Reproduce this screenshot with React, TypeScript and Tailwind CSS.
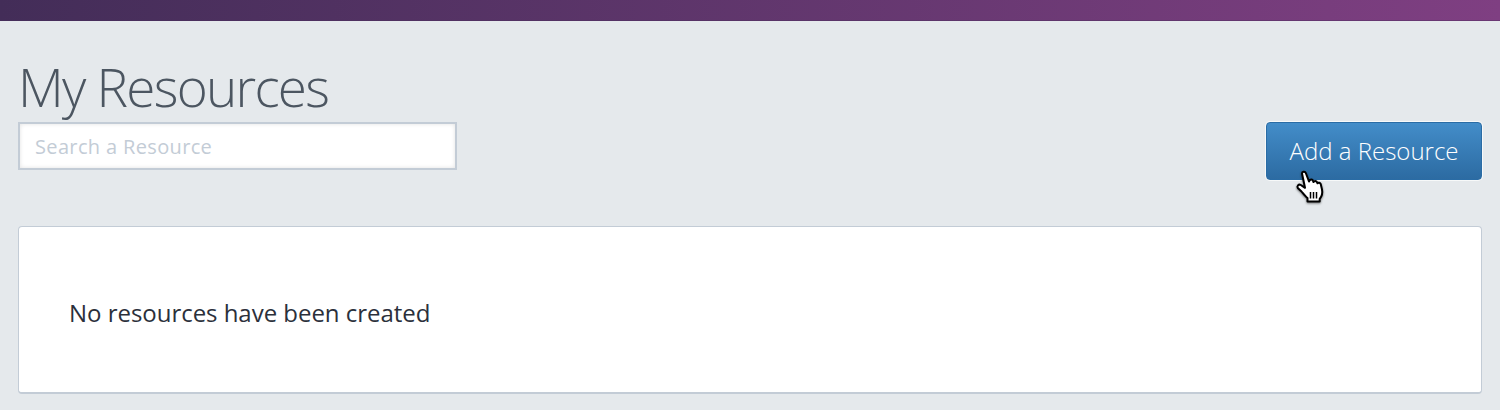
export default function App() {
  return (
    <div className="w-[1500px] h-[410px] overflow-hidden bg-[#e5e9ec] font-['Open_Sans',sans-serif]">
      <div className="h-[21px] bg-gradient-to-r from-[#432d58] to-[#7f3f82] border-b border-[#4a3060]/40" />
      <div className="px-[18px]">
        <h1 className="pt-[32px] h-[101px] text-[53px] leading-[68px] font-light text-[#4c5661] tracking-[-1.75px]">My Resources</h1>
        <div className="flex items-start justify-between">
          <input
            readOnly
            placeholder="Search a Resource"
            className="w-[439px] h-[48px] bg-white border-2 border-[#c3ccd6] pl-[15px] text-[20px] tracking-[0.35px] text-[#333] placeholder:text-[#c3ccd6] outline-none shadow-[inset_0_0_4px_rgba(0,0,0,0.12)]"
          />
          <div className="relative">
            <button className="w-[216px] h-[58px] rounded-[4px] border border-[#2a6ca5] bg-gradient-to-b from-[#438dc9] to-[#2c6ba2] text-[24px] font-light text-white shadow-[0_0_0_1px_rgba(255,255,255,0.7)]">
              Add a Resource
            </button>
            <svg className="absolute left-[29px] top-[47px] w-[34px] h-[38px]" viewBox="0 0 34 38">
              <defs>
                <filter id="s" x="-30%" y="-30%" width="160%" height="160%">
                  <feDropShadow dx="0" dy="1" stdDeviation="1" floodColor="#000" floodOpacity="0.5" />
                </filter>
              </defs>
              <path
                d="M7 4.500c0-2 3-2.500 3.800-.5l3.200 8.500 .5-1c.8-1.500 3-1.300 3.500.3l.5 1.200c.6-1.400 2.800-1.400 3.400 0l.6 1.300c.8-1 2.800-.8 3.200 .8 l1.300 5.400c.8 4-.2 7-2.300 9.500v2.500H12.500v-3.500c-2-1.200-4-4-6-6.500L2.800 19c-1.200-1.800 .8-4.300 3-3l4.200 2.800L7 4.500z"
                fill="#fff"
                stroke="#000"
                strokeWidth="2"
                strokeLinejoin="round"
                filter="url(#s)"
              />
              <path d="M15.500 23v6.500M18.500 23v6.500M21.500 23v6.500" stroke="#000" strokeWidth="1.500" fill="none" />
            </svg>
          </div>
        </div>
        <div className="mt-[46px] h-[168px] rounded-[4px] bg-white border border-[#c3ccd6] border-b-2 flex items-center pl-[50px] pt-[6px] text-[24px] tracking-[-0.03px] text-[#2b303b]">
          No resources have been created
        </div>
      </div>
    </div>
  );
}
